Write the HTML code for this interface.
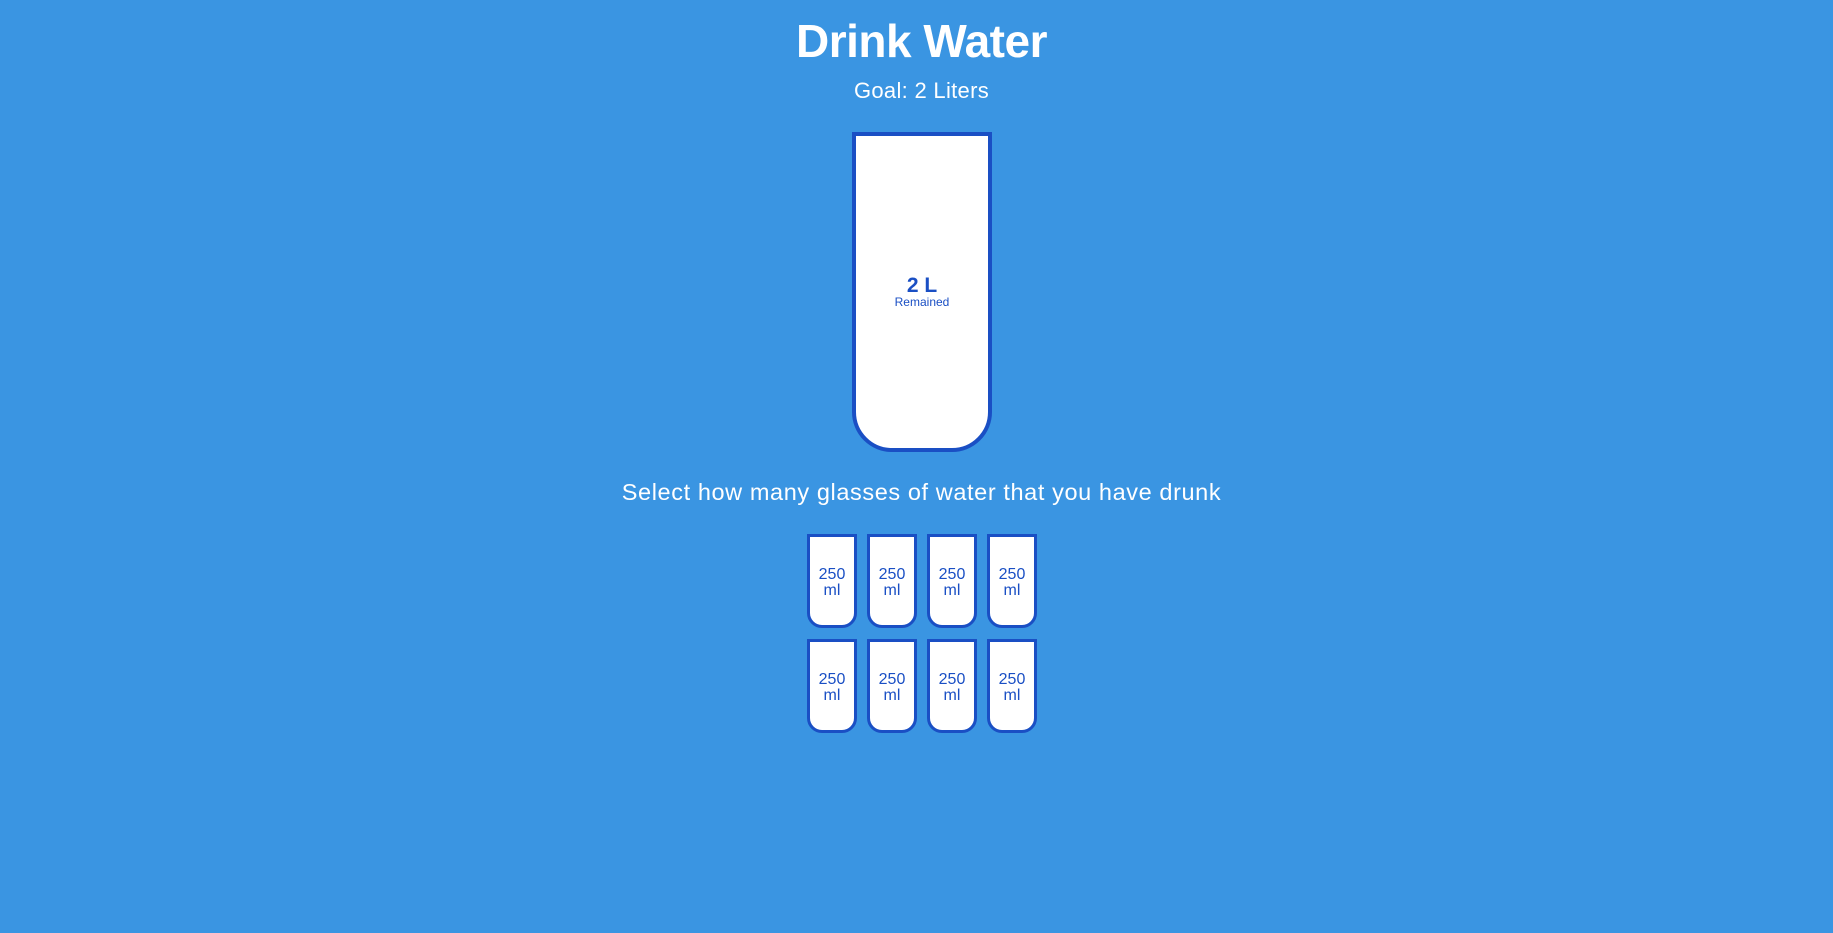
<!DOCTYPE html>
<html><head><style>
body{margin:0;background:#3a95e2;width:1833px;height:933px;overflow:hidden;font-family:"Liberation Sans",sans-serif;color:#fff;position:relative}
.c{position:absolute;left:5px;width:1833px;text-align:center}
h1{margin:0;font-size:46px;font-weight:bold;top:14px;letter-spacing:-0.5px}
.goal{top:78px;font-size:22px;letter-spacing:0.3px}
.cup{position:absolute;left:852px;top:132px;width:132px;height:312px;background:#fff;border:4px solid #1a4fc4;border-radius:0 0 40px 40px;color:#1a4fc4;text-align:center}
.cup .l{position:absolute;top:138px;width:100%;font-size:21px;font-weight:bold;line-height:24px}
.cup .r{position:absolute;top:159px;width:100%;font-size:12px}
.sel{top:479px;font-size:23.5px;letter-spacing:0.6px}
.s{position:absolute;width:44px;height:88px;background:#fff;border:3px solid #1a4fc4;border-radius:0 0 15px 15px;color:#1a4fc4;font-size:16px;line-height:16px;text-align:center;box-sizing:content-box}
.s span{position:absolute;top:30px;left:0;width:100%}
</style></head><body>
<h1 class="c" style="position:absolute">Drink Water</h1>
<div class="c goal">Goal: 2 Liters</div>
<div class="cup"><div class="l">2 L</div><div class="r">Remained</div></div>
<div class="c sel">Select how many glasses of water that you have drunk</div>
<div class="s" style="left:807px;top:534px"><span>250<br>ml</span></div>
<div class="s" style="left:867px;top:534px"><span>250<br>ml</span></div>
<div class="s" style="left:927px;top:534px"><span>250<br>ml</span></div>
<div class="s" style="left:987px;top:534px"><span>250<br>ml</span></div>
<div class="s" style="left:807px;top:639px"><span>250<br>ml</span></div>
<div class="s" style="left:867px;top:639px"><span>250<br>ml</span></div>
<div class="s" style="left:927px;top:639px"><span>250<br>ml</span></div>
<div class="s" style="left:987px;top:639px"><span>250<br>ml</span></div>
</body></html>
